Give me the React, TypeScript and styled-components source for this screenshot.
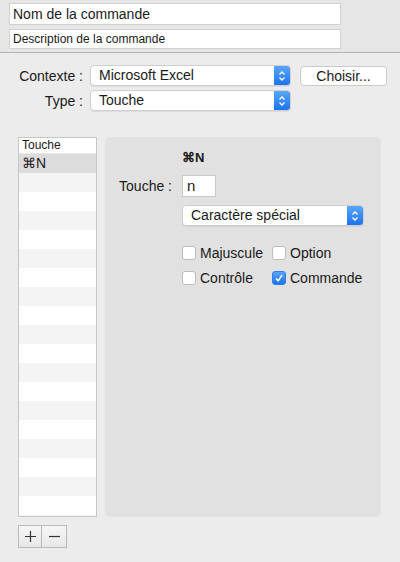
import { FC } from "react";
import styled, { createGlobalStyle } from "styled-components";

const GlobalStyle = createGlobalStyle`
  html, body {
    margin: 0;
    padding: 0;
    background: #ececec;
  }
  body {
    font-family: "Liberation Sans", Arial, sans-serif;
    color: #1a1a1a;
  }
`;

const Window = styled.div`
  width: 400px;
  height: 562px;
  background: #ececec;
  overflow: hidden;
  display: flex;
  flex-direction: column;
`;

const Header = styled.div`
  height: 53px;
  box-sizing: border-box;
  padding: 3px 0 0 9px;
  background: #e6e6e6;
  border-bottom: 1px solid #b3b3b3;
  display: flex;
  flex-direction: column;
  gap: 4px;
`;

const TextField = styled.div<{ $small?: boolean }>`
  width: 332px;
  height: ${(p) => (p.$small ? 20 : 22)}px;
  box-sizing: border-box;
  background: #fff;
  border: 1px solid #d2d2d2;
  padding: 0 3px;
  font-size: ${(p) => (p.$small ? 12 : 14)}px;
  line-height: ${(p) => (p.$small ? 18 : 20)}px;
  white-space: nowrap;
`;

const Form = styled.div`
  display: grid;
  grid-template-columns: 83px auto auto;
  justify-content: start;
  column-gap: 7px;
  row-gap: 4px;
  padding-top: 12px;
  align-items: center;
  justify-items: start;
`;

const Label = styled.div`
  justify-self: end;
  font-size: 14px;
  white-space: nowrap;
`;

const Popup = styled.div<{ $width: number }>`
  width: ${(p) => p.$width}px;
  height: 21px;
  box-sizing: border-box;
  background: #fff;
  border: 1px solid #cfcfcf;
  border-radius: 4px;
  box-shadow: 0 1px 0 rgba(0, 0, 0, 0.06);
  display: flex;
  align-items: stretch;
  overflow: hidden;
  font-size: 14px;
`;

const PopupText = styled.div`
  flex: 1;
  padding-left: 8px;
  line-height: 19px;
  white-space: nowrap;
`;

const Stepper = styled.div`
  width: 16px;
  background: linear-gradient(#5aa6fb, #1b73f0);
  display: flex;
  align-items: center;
  justify-content: center;
`;

const PushButton = styled.div`
  width: 87px;
  height: 20px;
  box-sizing: border-box;
  margin-left: 2px;
  background: #fff;
  border: 1px solid #cbcbcb;
  border-radius: 4px;
  font-size: 14px;
  line-height: 18px;
  text-align: center;
`;

const Body = styled.div`
  display: flex;
  gap: 8px;
  padding: 26px 0 0 18px;
`;

const List = styled.div`
  width: 79px;
  height: 380px;
  box-sizing: border-box;
  border: 1px solid #c6c6c6;
  background: #fff;
  overflow: hidden;
`;

const ListHeader = styled.div`
  height: 16px;
  padding-left: 3px;
  font-size: 12px;
  line-height: 15px;
  background: #fff;
  border-bottom: 1px solid #e6e6e6;
  box-sizing: border-box;
`;

const ListRow = styled.div<{ $selected?: boolean; $odd?: boolean }>`
  height: 19px;
  padding-left: 3px;
  font-size: 14px;
  line-height: 19px;
  background: ${(p) => (p.$selected ? "#dcdcdc" : p.$odd ? "#f4f4f4" : "#fff")};
`;

const Panel = styled.div`
  width: 276px;
  height: 380px;
  background: #e1e1e1;
  border-radius: 5px;
  display: grid;
  grid-template-columns: 67px auto;
  justify-content: start;
  column-gap: 10px;
  align-content: start;
  align-items: center;
  justify-items: start;
  padding-top: 13px;
  box-sizing: border-box;
`;

const Shortcut = styled.div`
  grid-column: 2;
  font-weight: bold;
  font-size: 13px;
  height: 16px;
  line-height: 16px;
  margin-bottom: 9px;
`;

const KeyField = styled.div`
  width: 34px;
  height: 22px;
  box-sizing: border-box;
  background: #fff;
  border: 1px solid #c8c8c8;
  padding-left: 4px;
  font-size: 15px;
  line-height: 20px;
`;

const Spacer = styled.div`
  grid-column: 2;
  padding-top: 8px;
`;

const Checks = styled.div`
  grid-column: 2;
  display: grid;
  grid-template-columns: 90px auto;
  row-gap: 11px;
  margin-top: 20px;
`;

const CheckItem = styled.div`
  display: flex;
  align-items: center;
  gap: 4px;
  font-size: 14px;
  height: 14px;
  white-space: nowrap;
`;

const Box = styled.div<{ $checked?: boolean }>`
  width: 14px;
  height: 14px;
  flex: none;
  box-sizing: border-box;
  border-radius: 3px;
  background: ${(p) => (p.$checked ? "linear-gradient(#5aa6fb, #1b73f0)" : "#fff")};
  border: 1px solid ${(p) => (p.$checked ? "#2f7fe8" : "#bcbcbc")};
  display: flex;
  align-items: center;
  justify-content: center;
`;

const Footer = styled.div`
  display: flex;
  padding: 8px 0 0 18px;
`;

const SegButton = styled.div`
  width: 24px;
  height: 23px;
  box-sizing: border-box;
  background: linear-gradient(#f6f6f6, #e8e8e8);
  border: 1px solid #b9b9b9;
  display: flex;
  align-items: center;
  justify-content: center;
  & + & {
    border-left: none;
    width: 25px;
  }
`;

const StepperIcon: FC = () => (
  <svg width="8" height="12" viewBox="0 0 8 12">
    <path d="M1.5 4.5 L4 2 L6.5 4.5 M1.5 7.5 L4 10 L6.5 7.5" stroke="#fff" strokeWidth="1.3" fill="none" />
  </svg>
);

const PopupButton: FC<{ width: number; text: string }> = ({ width, text }) => (
  <Popup $width={width}>
    <PopupText>{text}</PopupText>
    <Stepper>
      <StepperIcon />
    </Stepper>
  </Popup>
);

const Check: FC<{ label: string; checked?: boolean }> = ({ label, checked }) => (
  <CheckItem>
    <Box $checked={checked}>
      {checked && (
        <svg width="10" height="10" viewBox="0 0 10 10">
          <path d="M2 5.5 L4.2 7.8 L8 2.2" stroke="#fff" strokeWidth="1.5" fill="none" />
        </svg>
      )}
    </Box>
    {label}
  </CheckItem>
);

const App: FC = () => {
  const rows = Array.from({ length: 20 }, (_, i) => i);
  return (
    <Window>
      <GlobalStyle />
      <Header>
        <TextField>Nom de la commande</TextField>
        <TextField $small>Description de la commande</TextField>
      </Header>
      <Form>
        <Label>Contexte :</Label>
        <PopupButton width={201} text="Microsoft Excel" />
        <PushButton>Choisir...</PushButton>
        <Label>Type :</Label>
        <PopupButton width={201} text="Touche" />
      </Form>
      <Body>
        <List>
          <ListHeader>Touche</ListHeader>
          {rows.map((i) => (
            <ListRow key={i} $selected={i === 0} $odd={i % 2 === 1}>
              {i === 0 ? "⌘N" : ""}
            </ListRow>
          ))}
        </List>
        <Panel>
          <Shortcut>⌘N</Shortcut>
          <Label>Touche :</Label>
          <KeyField>n</KeyField>
          <Spacer>
            <PopupButton width={182} text="Caractère spécial" />
          </Spacer>
          <Checks>
            <Check label="Majuscule" />
            <Check label="Option" />
            <Check label="Contrôle" />
            <Check label="Commande" checked />
          </Checks>
        </Panel>
      </Body>
      <Footer>
        <SegButton>
          <svg width="13" height="13" viewBox="0 0 13 13">
            <path d="M6.5 1 V12 M1 6.5 H12" stroke="#333" strokeWidth="1.2" />
          </svg>
        </SegButton>
        <SegButton>
          <svg width="13" height="13" viewBox="0 0 13 13">
            <path d="M1 6.5 H12" stroke="#333" strokeWidth="1.2" />
          </svg>
        </SegButton>
      </Footer>
    </Window>
  );
};

export default App;
